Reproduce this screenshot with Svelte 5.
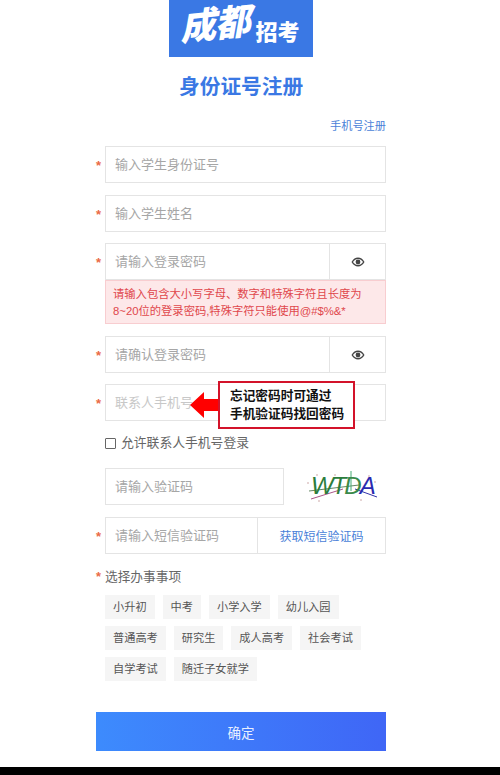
<script>
	const types = [
		["小升初", "中考", "小学入学", "幼儿入园"],
		["普通高考", "研究生", "成人高考", "社会考试"],
		["自学考试", "随迁子女就学"],
	];
</script>

<div class="page">
	<div class="logo">
		<span class="brush">成都</span><span class="plain">招考</span>
	</div>
	<h1 class="title">身份证号注册</h1>

	<form class="form">
		<a class="switch" href="#phone">手机号注册</a>

		<div class="row first">
			<span class="star">*</span>
			<div class="box"><input placeholder="输入学生身份证号" /></div>
		</div>

		<div class="row">
			<span class="star">*</span>
			<div class="box"><input placeholder="输入学生姓名" /></div>
		</div>

		<div class="row tight">
			<span class="star">*</span>
			<div class="box">
				<input placeholder="请输入登录密码" />
				<div class="eye">
					<svg width="14" height="10" viewBox="0 0 14 10">
						<path d="M0.5 5C2.2 2 4.4 0.6 7 0.6S11.8 2 13.5 5C11.8 8 9.6 9.4 7 9.4S2.2 8 0.5 5Z" fill="#444" />
						<path d="M2 5C3.3 3 5 2 7 2s3.7 1 5 3c-1.3 2-3 3-5 3S3.3 7 2 5Z" fill="#fff" />
						<circle cx="7" cy="5" r="2.4" fill="#444" />
					</svg>
				</div>
			</div>
		</div>
		<div class="error">请输入包含大小写字母、数字和特殊字符且长度为<br />8~20位的登录密码,特殊字符只能使用@#$%&*</div>

		<div class="row">
			<span class="star">*</span>
			<div class="box">
				<input placeholder="请确认登录密码" />
				<div class="eye">
					<svg width="14" height="10" viewBox="0 0 14 10">
						<path d="M0.5 5C2.2 2 4.4 0.6 7 0.6S11.8 2 13.5 5C11.8 8 9.6 9.4 7 9.4S2.2 8 0.5 5Z" fill="#444" />
						<path d="M2 5C3.3 3 5 2 7 2s3.7 1 5 3c-1.3 2-3 3-5 3S3.3 7 2 5Z" fill="#fff" />
						<circle cx="7" cy="5" r="2.4" fill="#444" />
					</svg>
				</div>
			</div>
		</div>

		<div class="row tight">
			<span class="star">*</span>
			<div class="box faint"><input placeholder="联系人手机号" /></div>
			<div class="callout">
				<svg class="arrow" width="30" height="26" viewBox="0 0 30 26">
					<path d="M0 13L14 0V7H30V19H14V26Z" fill="#f00" />
				</svg>
				<div class="note">忘记密码时可通过<br />手机验证码找回密码</div>
			</div>
		</div>

		<label class="allow">
			<span class="check"></span>
			允许联系人手机号登录
		</label>

		<div class="row captcha">
			<span class="star"></span>
			<div class="box short"><input placeholder="请输入验证码" /></div>
			<svg class="code" width="74" height="36" viewBox="0 0 74 36">
				<path d="M6 30L38 20" stroke="#a58" fill="none" />
				<path d="M4 22L54 16" stroke="#686" fill="none" />
				<path d="M46 2V22" stroke="#4a7" fill="none" />
				<path d="M50 20L72 28" stroke="#33a" fill="none" />
				<text x="6" y="25"><tspan class="c1">WT</tspan><tspan class="c2">D</tspan><tspan class="c3">A</tspan></text>
				<g fill="#b88">
					<circle cx="12" cy="6" r=".7" /><circle cx="3" cy="14" r=".7" /><circle cx="64" cy="7" r=".7" />
					<circle cx="70" cy="13" r=".7" /><circle cx="14" cy="32" r=".7" /><circle cx="56" cy="31" r=".7" />
					<circle cx="30" cy="6" r=".7" />
				</g>
			</svg>
		</div>

		<div class="row">
			<span class="star">*</span>
			<div class="box">
				<input placeholder="请输入短信验证码" />
				<button type="button" class="get">获取短信验证码</button>
			</div>
		</div>

		<div class="label"><span class="mini">*</span>选择办事事项</div>
		<div class="tags">
			{#each types as line}
				<div class="tag-line">
					{#each line as item}
						<span class="tag">{item}</span>
					{/each}
				</div>
			{/each}
		</div>

		<button type="button" class="submit">确定</button>
	</form>
	<div class="bar"></div>
</div>

<style>
	:global(body) {
		margin: 0;
		background: #fff;
	}

	.page {
		width: 500px;
		height: 775px;
		overflow: hidden;
		display: flex;
		flex-direction: column;
		font-family: "Liberation Sans", "Noto Sans CJK SC", sans-serif;
		color: #666;
	}

	.logo {
		width: 144px;
		height: 57px;
		margin-left: 169px;
		background: #3a78e4;
		color: #fff;
		display: flex;
		align-items: center;
		justify-content: center;
		flex-shrink: 0;
	}

	.brush {
		font-size: 36px;
		font-weight: 900;
		transform: rotate(-6deg) skewX(-16deg) translateY(-4px);
		line-height: 1;
		letter-spacing: -1px;
	}

	.plain {
		font-size: 22px;
		font-weight: 900;
		margin-left: 3px;
		margin-top: 2px;
	}

	.title {
		margin: 17px 0 0 179px;
		font-size: 20.7px;
		line-height: 26px;
		font-weight: 700;
		color: #3a78e4;
	}

	.form {
		width: 290px;
		margin-left: 96px;
		display: flex;
		flex-direction: column;
		flex: 1;
	}

	.switch {
		align-self: flex-end;
		margin-top: 18px;
		font-size: 11.2px;
		line-height: 16px;
		color: #4a7fd8;
		text-decoration: none;
	}

	.row {
		display: flex;
		align-items: center;
		margin-top: 12px;
		position: relative;
	}

	.row.tight {
		margin-top: 11px;
	}

	.star {
		width: 9px;
		color: #ea6a45;
		font-size: 13px;
		line-height: 14px;
		padding-top: 3px;
		font-weight: 700;
	}

	.box {
		width: 281px;
		height: 37px;
		box-sizing: border-box;
		border: 1px solid #e4e4e4;
		display: flex;
		background: #fff;
	}

	.box.short {
		width: 179px;
	}

	.box.faint input::placeholder {
		color: #c8c8c8;
	}

	input {
		flex: 1;
		min-width: 0;
		border: none;
		outline: none;
		padding: 0 0 0 9px;
		font: 13px "Liberation Sans", "Noto Sans CJK SC", sans-serif;
		background: transparent;
	}

	input::placeholder {
		color: #a6a6a6;
		opacity: 1;
	}

	.eye {
		width: 55px;
		border-left: 1px solid #e4e4e4;
		display: flex;
		align-items: center;
		justify-content: center;
	}

	.error {
		margin-left: 9px;
		height: 44px;
		box-sizing: border-box;
		padding: 5px 7px;
		background: #fde8e9;
		border: 1px solid #f8cdd0;
		color: #e0474c;
		font-size: 11.3px;
		line-height: 16.5px;
		white-space: nowrap;
	}

	.callout {
		position: absolute;
		left: 94px;
		top: -3px;
		display: flex;
		align-items: center;
	}

	.arrow {
		display: block;
		margin-right: -2px;
	}

	.note {
		width: 137px;
		height: 48px;
		box-sizing: border-box;
		padding: 4px 0 0 10px;
		background: #fff;
		border: 2px solid #d3132a;
		color: #111;
		font-size: 12.7px;
		line-height: 18px;
		font-weight: 700;
		white-space: nowrap;
	}

	.allow {
		display: flex;
		align-items: center;
		margin: 13px 0 0 9px;
		font-size: 12.8px;
		line-height: 18px;
		color: #666;
	}

	.check {
		width: 9px;
		height: 9px;
		border: 1px solid #666;
		border-radius: 1px;
		margin-right: 5px;
	}

	.captcha {
		margin-top: 16px;
	}

	.code {
		display: block;
		margin-left: 21px;
	}

	.code text {
		font-family: "Liberation Sans", sans-serif;
		font-size: 24px;
		font-style: italic;
		letter-spacing: -2px;
	}

	.c1 {
		fill: #2c7d3c;
	}

	.c2 {
		fill: #3a8a4a;
	}

	.c3 {
		fill: #2a2ab0;
	}

	.get {
		width: 128px;
		border: none;
		border-left: 1px solid #e4e4e4;
		background: #fff;
		color: #4a7fd8;
		font: 12px "Liberation Sans", "Noto Sans CJK SC", sans-serif;
		padding: 0;
	}

	.label {
		margin-top: 15px;
		font-size: 12.7px;
		line-height: 16px;
		color: #666;
	}

	.mini {
		display: inline-block;
		width: 9px;
		color: #ea6a45;
		font-weight: 700;
	}

	.tags {
		margin: 10px 0 0 9px;
		display: flex;
		flex-direction: column;
		gap: 7.5px;
	}

	.tag-line {
		display: flex;
		gap: 8px;
	}

	.tag {
		padding: 0 8px;
		height: 23.5px;
		line-height: 24px;
		background: #f5f5f5;
		font-size: 11.2px;
		color: #555;
	}

	.submit {
		margin-top: 31.5px;
		height: 39px;
		border: none;
		background: linear-gradient(90deg, #3d8bfd, #3f66f6);
		color: #e8efff;
		font: 13.5px "Liberation Sans", "Noto Sans CJK SC", sans-serif;
		padding: 0;
	}

	.bar {
		position: absolute;
		left: 0;
		top: 767px;
		width: 500px;
		height: 8px;
		background: #000;
	}
</style>
